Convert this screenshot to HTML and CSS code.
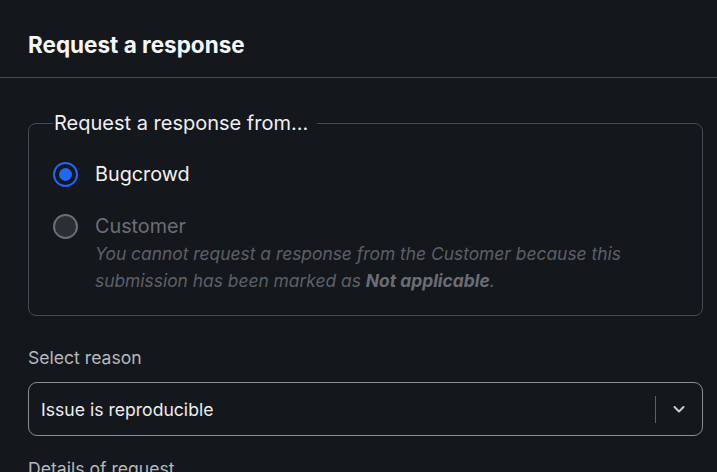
FILE: index.html
```html
<!DOCTYPE html>
<html lang="en">
<head>
<meta charset="utf-8">
<title>Request a response</title>
<link rel="stylesheet" href="styles.css">
</head>
<body>
<div class="modal">
  <header class="modal-header">
    <h2 class="modal-title">Request a response</h2>
  </header>
  <div class="modal-body">
    <fieldset class="group">
      <legend class="group-legend">Request a response from...</legend>
      <label class="option">
        <span class="radio radio-checked"><span class="radio-dot"></span></span>
        <span class="option-text">Bugcrowd</span>
      </label>
      <div class="option option-disabled">
        <span class="radio radio-disabled"></span>
        <div class="option-content">
          <span class="option-text">Customer</span>
          <p class="option-help">You cannot request a response from the Customer because this submission has been marked as <strong>Not applicable</strong>.</p>
        </div>
      </div>
    </fieldset>

    <div class="field">
      <div class="field-label">Select reason</div>
      <div class="select">
        <span class="select-value">Issue is reproducible</span>
        <span class="select-sep"></span>
        <span class="select-caret">
          <svg width="14" height="14" viewBox="0 0 14 14"><path d="M2.5 5 L7 9.5 L11.5 5" fill="none" stroke="#c9ccd1" stroke-width="2" stroke-linecap="round" stroke-linejoin="round"/></svg>
        </span>
      </div>
    </div>

    <div class="field">
      <div class="field-label">Details of request</div>
    </div>
  </div>
</div>
</body>
</html>
```

FILE: styles.css
```css
* { box-sizing: border-box; }
html, body {
  margin: 0;
  padding: 0;
  background: #14171c;
}
body {
  font-family: Inter, "Noto Sans", "Liberation Sans", sans-serif;
  color: #f1f3f5;
  width: 717px;
  height: 472px;
  overflow: hidden;
}
.modal-header {
  padding: 31px 28px 18px;
  border-bottom: 1px solid #45484e;
}
.modal-title {
  margin: 0;
  font-size: 22.5px;
  line-height: 28px;
  font-weight: 700;
  color: #f5f6f8;
}
.modal-body {
  padding: 33px 14px 0 28px;
}
.group {
  margin: 0;
  border: 1px solid #474a50;
  border-radius: 8px;
  padding: 27px 24px 21px 24px;
}
.group-legend {
  padding: 0 9px 0 1px;
  margin-left: 0;
  font-size: 20px;
  line-height: 24px;
  color: #eef0f3;
}
.option {
  display: flex;
  align-items: flex-start;
  gap: 17px;
}
.option + .option { margin-top: 27px; }
.radio {
  flex: none;
  width: 25px;
  height: 25px;
  border-radius: 50%;
  display: flex;
  align-items: center;
  justify-content: center;
  margin-top: 0;
}
.radio-checked { border: 2px solid #2266f5; }
.radio-dot {
  width: 13px;
  height: 13px;
  border-radius: 50%;
  background: #2266f5;
}
.radio-disabled {
  border: 2px solid #6c6f75;
  background: #2b2e33;
}
.option-text {
  font-size: 19.8px;
  line-height: 25px;
}
.option-disabled .option-text { color: #6b6e74; }
.option-content { display: flex; flex-direction: column; }
.option-help {
  margin: 1px 0 0;
  font-size: 17.4px;
  line-height: 27px;
  font-style: italic;
  color: #5d6066;
}
.option-help strong { font-weight: 700; color: #6a6d73; }
.field { margin-top: 31px; }
.field + .field { margin-top: 22px; }
.field-label {
  font-size: 17.6px;
  line-height: 22px;
  color: #b6b9be;
}
.select {
  margin-top: 13px;
  height: 54px;
  border: 1px solid #8a8d92;
  border-radius: 9px;
  display: flex;
  align-items: center;
  padding-left: 12px;
}
.select-value {
  flex: 1;
  font-size: 17.6px;
  color: #eceef1;
}
.select-sep {
  width: 1px;
  height: 27px;
  background: #5d6066;
}
.select-caret {
  width: 46px;
  display: flex;
  align-items: center;
  justify-content: center;
}
.select-caret svg { display: block; }
```
